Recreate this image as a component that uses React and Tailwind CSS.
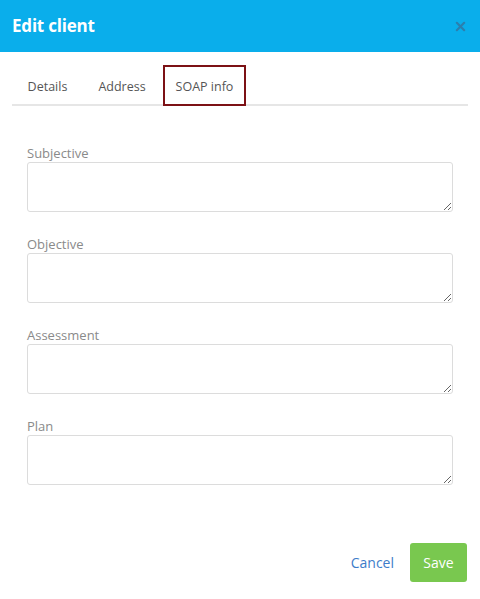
import React, { useState } from 'react';

const font = { fontFamily: '"Open Sans", "Noto Sans", sans-serif' };

function Field({ label }) {
  return (
    <div className="flex flex-col">
      <label className="text-[13px] leading-[18px] text-[#8a8a8a]">{label}</label>
      <textarea className="h-[50px] w-full rounded-[3px] border border-[#dcdcdc] bg-white outline-none" />
    </div>
  );
}

export default function App() {
  const [tab, setTab] = useState('soap');
  const tabs = [
    { id: 'details', label: 'Details', w: 'w-[67px]' },
    { id: 'address', label: 'Address', w: 'w-[74px]' },
    { id: 'soap', label: 'SOAP info', w: 'w-[83px]' },
  ];

  return (
    <div className="h-[599px] w-[480px] bg-white" style={font}>
      <div className="flex h-[52px] items-center justify-between bg-[#0aaeeb] pl-3 pr-[14px]">
        <h1 className="text-[17px] font-bold tracking-[-0.2px] text-white">Edit client</h1>
        <button className="text-[#2b7fae]">
          <svg width="11" height="11" viewBox="0 0 12 12">
            <path d="M2 2 L10 10 M10 2 L2 10" stroke="currentColor" strokeWidth="2.4" strokeLinecap="round" />
          </svg>
        </button>
      </div>

      <div className="mx-3 mt-[13px] flex border-b-2 border-[#e6e6e6] pl-[2px]">
        {tabs.map((t) => (
          <button
            key={t.id}
            onClick={() => setTab(t.id)}
            className={`-mb-[2px] mr-1 h-[41px] pt-[3px] ${t.w} text-center text-[12.5px] text-[#555] ${
              tab === t.id ? 'border-2 border-[#7c1115]' : 'border-2 border-transparent'
            }`}
          >
            {t.label}
          </button>
        ))}
      </div>

      <div className="mt-[38px] flex flex-col gap-[23px] px-[27px]">
        <Field label="Subjective" />
        <Field label="Objective" />
        <Field label="Assessment" />
        <Field label="Plan" />
      </div>

      <div className="mt-[58px] flex items-center justify-end gap-[16px] pr-[13px]">
        <button className="text-[14px] text-[#3d7cc9]">Cancel</button>
        <button className="h-[39px] w-[57px] rounded-[3px] bg-[#79c84f] text-[14px] text-white">Save</button>
      </div>
    </div>
  );
}
